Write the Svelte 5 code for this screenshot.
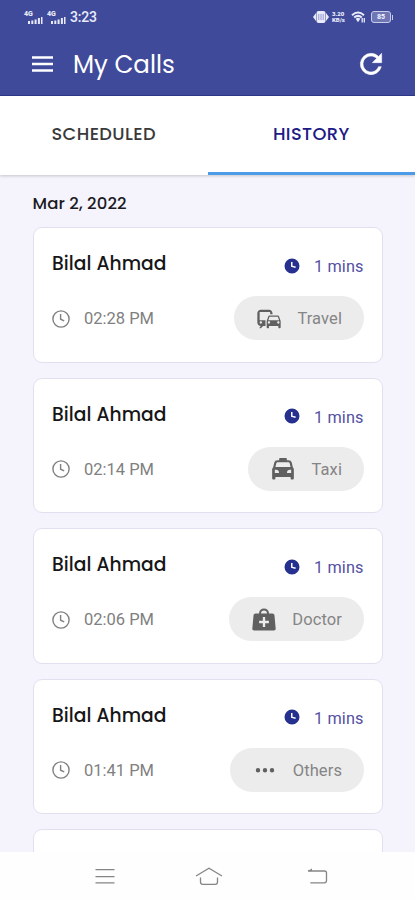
<script lang="ts">
  let activeTab = $state('HISTORY');

  const tabs = ['SCHEDULED', 'HISTORY'];

  const calls = [
    { name: 'Bilal Ahmad', time: '02:28 PM', duration: '1 mins', type: 'Travel' },
    { name: 'Bilal Ahmad', time: '02:14 PM', duration: '1 mins', type: 'Taxi' },
    { name: 'Bilal Ahmad', time: '02:06 PM', duration: '1 mins', type: 'Doctor' },
    { name: 'Bilal Ahmad', time: '01:41 PM', duration: '1 mins', type: 'Others' },
  ];

  const icons = {
    Travel:
      'M12 4H5C3.34 4 2 5.34 2 7v8c0 1.66 1.34 3 3 3l-1 1v1h1l2-2.03L9 18v-5H4V5.98L13 6v2h2V7c0-1.66-1.34-3-3-3zM5 14c.55 0 1 .45 1 1s-.45 1-1 1-1-.45-1-1 .45-1 1-1zm15.57-4.34c-.14-.4-.52-.66-.97-.66h-7.19c-.46 0-.83.26-.98.66L10 13.77l.01 5.51c0 .38.31.72.69.72h.62c.38 0 .68-.38.68-.76V18h8v1.24c0 .38.31.76.69.76h.61c.38 0 .69-.34.69-.72l.01-1.37v-4.14l-1.43-4.11zm-8.16.34h7.19l1.03 3h-9.25l1.03-3zM12 16c-.55 0-1-.45-1-1s.45-1 1-1 1 .45 1 1-.45 1-1 1zm8 0c-.55 0-1-.45-1-1s.45-1 1-1 1 .45 1 1-.45 1-1 1z',
    Taxi:
      'M9.5 2.5h5q.8 0 .8.8v1.2h1.5q2.2 0 2.7 2l.9 4q.9.7.9 2V20q0 1-1 1h-.8q-1 0-1-1v-1.2h-13V20q0 1-1 1h-.8q-1 0-1-1v-7.5q0-1.3.9-2l.9-4q.5-2 2.7-2h1.5V3.3q0-.8.8-.8zM7.3 6.2q-.8 0-1 .8l-.8 3.3h13l-.8-3.3q-.2-.8-1-.8zM5 12.6v2.8h3.6q0-2.8-2.6-2.8zm14 0v2.8h-3.6q0-2.8 2.600-2.800z',
    Doctor:
      'M7.800 6.500V6a4.200 3.800 0 0 1 8.400 0v.5h2.900c1.100 0 1.800.6 1.900 1.700l1 11.100c.1 1-.5 1.700-1.600 1.700H3.600c-1.100 0-1.700-.7-1.600-1.700l1-11.100c.1-1.100.8-1.700 1.900-1.700zm1.700 0h5V6a2.500 2.200 0 0 0-5 0zM11 9.500v3.200H7.800v2H11v3.200h2v-3.200h3.200v-2H13V9.500z',
    Others:
      'M6 10.3a1.9 1.9 0 1 0 0 3.8 1.9 1.9 0 0 0 0-3.8zm6 0a1.9 1.9 0 1 0 0 3.8 1.9 1.9 0 0 0 0-3.8zm6 0a1.9 1.9 0 1 0 0 3.8 1.9 1.9 0 0 0 0-3.8z',
  };
</script>

<div class="screen">
  <header>
    <div class="status">
      <div class="status-left">
        {#each [1, 2] as sim}
          <div class="signal">
            <span>4G</span>
            <svg width="15" height="7" viewBox="0 0 15 7" fill="currentColor">
              <path d="M0 4h2v3H0zM3.3 3.5h2V7h-2zM6.6 2.5h2V7h-2zM9.9 1h2v6h-2zM13 0h1.5v7H13z" />
            </svg>
          </div>
        {/each}
        <span class="clock">3:23</span>
      </div>
      <div class="status-right">
        <svg width="16" height="12" viewBox="0 0 16 12" fill="currentColor">
          <path d="M3 2v8L0 6zM13 2v8l3-4z" />
          <rect x="3.5" y="0" width="9" height="12" rx="2" />
          <path d="M5.8 3v6M8 3v6M10.2 3v6" stroke="#7f86c2" stroke-width=".8" />
        </svg>
        <div class="speed"><span>3.20</span><span>KB/s</span></div>
        <svg width="15" height="12" viewBox="0 0 15 12">
          <path d="M1 4.3q6-5.5 12 0M3.2 6.6q3.8-3.5 7.6 0" fill="none" stroke="currentColor" stroke-width="2" />
          <path d="M4.7 7.7q2.3-2 4.6 0L7 11.2z" fill="currentColor" />
          <path d="M11.2 7v4.5M13.3 7v4.5" stroke="currentColor" stroke-width="1.3" />
        </svg>
        <div class="battery"><span>85</span></div>
      </div>
    </div>
    <div class="toolbar">
      <button class="menu" aria-label="Menu">
        <svg width="21" height="16" viewBox="0 0 21 16" fill="currentColor">
          <path d="M0 .3h21v2.5H0zM0 6.7h21v2.5H0zM0 13.2h21v2.5H0z" />
        </svg>
      </button>
      <h1>My Calls</h1>
      <button class="refresh" aria-label="Refresh">
        <svg width="32" height="32" viewBox="0 0 24 24" fill="currentColor" stroke="currentColor" stroke-width=".4">
          <path d="M17.65 6.35A7.95 7.95 0 0 0 12 4a8 8 0 1 0 7.73 10h-2.08A6 6 0 1 1 12 6c1.66 0 3.14.69 4.22 1.78L13 11h7V4l-2.35 2.35z" />
        </svg>
      </button>
    </div>
  </header>

  <nav class="tabs">
    {#each tabs as tab}
      <button class:active={activeTab === tab} onclick={() => (activeTab = tab)}>{tab}</button>
    {/each}
  </nav>

  <main>
    <h2>Mar 2, 2022</h2>
    {#each calls as call}
      <article class="card">
        <div class="row">
          <h3>{call.name}</h3>
          <div class="duration">
            <svg width="18" height="18" viewBox="0 0 24 24" fill="currentColor">
              <path d="M12 2a10 10 0 1 0 0 20 10 10 0 0 0 0-20zm4.5 12.6L10.7 13V6.5h2v5l4.4 1.3-.6 1.8z" />
            </svg>
            <span>{call.duration}</span>
          </div>
        </div>
        <div class="row bottom">
          <div class="time">
            <svg width="18" height="18" viewBox="0 0 18 18" fill="none" stroke="currentColor" stroke-width="1.4">
              <circle cx="9" cy="9" r="8.1" />
              <path d="M8.6 4v5.2l3.6 1.7" />
            </svg>
            <span>{call.time}</span>
          </div>
          <div class="chip">
            <svg width="28" height="28" viewBox="0 0 24 24" fill="currentColor">
              <path d={icons[call.type]} fill-rule="evenodd" />
            </svg>
            <span>{call.type}</span>
          </div>
        </div>
      </article>
    {/each}
    <article class="card"></article>
  </main>

  <footer>
    <svg width="20" height="17" viewBox="0 0 20 17" fill="none" stroke="currentColor" stroke-width="1.3">
      <path d="M.5 1.7h19M.5 8.6h19M.5 14.8h19" />
    </svg>
    <svg class="home" width="28" height="19" viewBox="0 0 28 19" fill="none" stroke="currentColor" stroke-width="1.3">
      <path d="M1 9 14 1.2 27 9M5.5 10.5V15q0 2.3 2.3 2.3h12.4q2.3 0 2.3-2.3v-4.5" />
    </svg>
    <svg width="21" height="17" viewBox="0 0 21 17" fill="none" stroke="currentColor" stroke-width="1.3">
      <path d="M1 3h16.5q2 0 2 2v7.5q0 2.3-2.3 2.3H3.3" />
      <path d="M.5 3 5 .5V3z" fill="currentColor" stroke="none" />
    </svg>
  </footer>
</div>

<style>
  :global(body) {
    margin: 0;
  }

  .screen {
    display: flex;
    flex-direction: column;
    width: 415px;
    height: 900px;
    overflow: hidden;
    background: #f5f4fc;
    font-family: Roboto, sans-serif;
  }

  h1,
  h2,
  h3,
  .tabs {
    margin: 0;
    font-family: Poppins, Inter, sans-serif;
  }

  button {
    padding: 0;
    border: 0;
    background: none;
    color: inherit;
    font: inherit;
    letter-spacing: inherit;
    cursor: pointer;
  }

  svg {
    display: block;
    flex: none;
  }

  header {
    flex: none;
    box-sizing: border-box;
    height: 96px;
    background: #3f4a9a;
    border-bottom: 1px solid #30388c;
    color: #fff;
  }

  .status {
    display: flex;
    justify-content: space-between;
    align-items: center;
    height: 34px;
    padding: 0 24px;
    color: #e9eafa;
  }

  .status-left,
  .status-right {
    display: flex;
    align-items: center;
  }

  .signal {
    display: flex;
    flex-direction: column;
    width: 23px;
    height: 13px;
    font-size: 7px;
    line-height: 6px;
    font-weight: 900;
  }

  .signal svg {
    margin-left: 4px;
  }

  .clock {
    font-size: 14px;
    font-weight: 500;
    letter-spacing: -0.2px;
  }

  .speed {
    display: flex;
    flex-direction: column;
    width: 15px;
    margin: 0 4px 0 3px;
    font-size: 6px;
    line-height: 6px;
    font-weight: 900;
  }

  .battery {
    position: relative;
    display: flex;
    align-items: center;
    justify-content: center;
    box-sizing: border-box;
    width: 20px;
    height: 12px;
    margin-left: 5px;
    border: 1.5px solid #c9cce8;
    border-radius: 3px;
    background: #6e76b5;
    font-size: 7px;
    font-weight: 900;
  }

  .battery::after {
    content: '';
    position: absolute;
    right: -3px;
    width: 1.5px;
    height: 5px;
    background: #c9cce8;
  }

  .toolbar {
    display: flex;
    align-items: center;
    height: 60px;
    padding: 0 28px 0 32px;
  }

  h1 {
    flex: 1;
    margin-left: 20px;
    font-size: 24.5px;
    font-weight: 400;
  }

  .tabs {
    display: flex;
    flex: none;
    height: 79px;
    background: #fff;
    box-shadow: 0 1px 3px rgba(0, 0, 0, 0.2);
    font-size: 17.8px;
    font-weight: 500;
    letter-spacing: 0.4px;
    color: #3a3a3a;
  }

  .tabs button {
    flex: 1;
    padding-bottom: 2px;
    border-bottom: 3px solid transparent;
  }

  .tabs .active {
    color: #211a86;
    border-color: #4c9be8;
  }

  main {
    flex: 1;
    min-height: 0;
    padding: 18px 32px 0 32.5px;
    overflow: hidden;
  }

  h2 {
    height: 34px;
    font-size: 16.5px;
    line-height: 22px;
    font-weight: 500;
    letter-spacing: 0.1px;
    color: #1b1b1f;
  }

  .card {
    box-sizing: border-box;
    height: 135.5px;
    margin-bottom: 15px;
    padding: 20px 18.5px 0;
    border: 1px solid #e2e0f0;
    border-radius: 9px;
    background: #fff;
  }

  .row {
    display: flex;
    justify-content: space-between;
    align-items: center;
    height: 34px;
  }

  h3 {
    padding-bottom: 3px;
    font-size: 18.7px;
    font-weight: 500;
    letter-spacing: 0.05px;
    color: #161618;
  }

  .duration {
    display: flex;
    align-items: center;
    gap: 13px;
    padding-top: 3px;
    font-size: 16.3px;
    letter-spacing: 0.1px;
    color: #5450a2;
  }

  .duration svg {
    color: #25308f;
    margin-bottom: 2px;
  }

  .bottom {
    height: 44px;
    margin-top: 14px;
  }

  .time {
    display: flex;
    align-items: center;
    gap: 14px;
    padding-top: 1px;
    font-size: 16.5px;
    color: #808080;
  }

  .chip {
    display: flex;
    align-items: center;
    height: 44px;
    padding: 1px 21.5px 0 21px;
    box-sizing: border-box;
    gap: 14px;
    border-radius: 22px;
    background: #ececec;
    font-size: 16.5px;
    letter-spacing: 0.1px;
    color: #858585;
  }

  .chip svg {
    color: #606060;
  }

  footer {
    display: flex;
    flex: none;
    align-items: center;
    justify-content: space-between;
    box-sizing: border-box;
    height: 48px;
    padding: 0 87px 0 95px;
    background: #fefefe;
    color: #858585;
  }

  .home {
    margin-right: 5px;
  }
</style>
